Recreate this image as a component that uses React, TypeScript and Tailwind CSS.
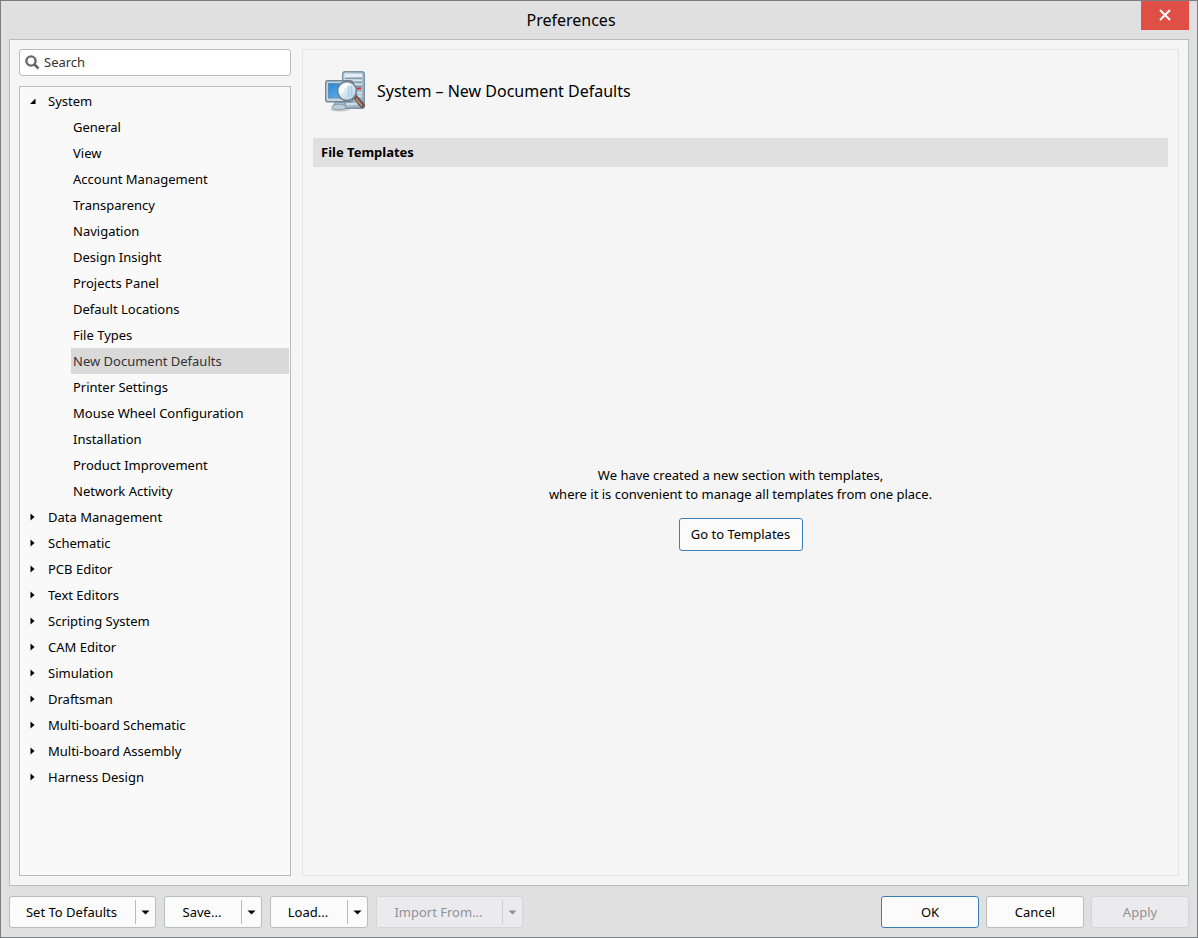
import React, { useState } from "react";

const systemPages = [
  "General",
  "View",
  "Account Management",
  "Transparency",
  "Navigation",
  "Design Insight",
  "Projects Panel",
  "Default Locations",
  "File Types",
  "New Document Defaults",
  "Printer Settings",
  "Mouse Wheel Configuration",
  "Installation",
  "Product Improvement",
  "Network Activity",
];

const sections = [
  "Data Management",
  "Schematic",
  "PCB Editor",
  "Text Editors",
  "Scripting System",
  "CAM Editor",
  "Simulation",
  "Draftsman",
  "Multi-board Schematic",
  "Multi-board Assembly",
  "Harness Design",
];

function SystemIcon() {
  return (
    <svg width="44" height="44" viewBox="0 0 44 44" aria-hidden="true" className="shrink-0">
      <defs>
        <linearGradient id="caseFill" x1="0" y1="0" x2="1" y2="1">
          <stop offset="0" stopColor="#d3dfe8" />
          <stop offset="1" stopColor="#8fa9bb" />
        </linearGradient>
        <linearGradient id="screenFill" x1="0" y1="0" x2="1" y2="1">
          <stop offset="0" stopColor="#2b83d6" />
          <stop offset="1" stopColor="#6bbcf5" />
        </linearGradient>
        <linearGradient id="lensFill" x1="0" y1="0" x2="1" y2="1">
          <stop offset="0" stopColor="#f4f8fb" />
          <stop offset="0.5" stopColor="#d8e8f3" />
          <stop offset="1" stopColor="#9fd0f0" />
        </linearGradient>
      </defs>
      <ellipse cx="17" cy="40.500" rx="10" ry="2" fill="#cdd1d4" />
      <rect x="19.700" y="2.700" width="21.600" height="36.600" rx="2.500" fill="url(#caseFill)" stroke="#7b93a4" strokeWidth="1.400" />
      <rect x="22" y="5" width="17" height="3" fill="#e6eef4" />
      <path d="M22 9.500h17M22 13.500h17M30 17.500h9" stroke="#7f9bb0" strokeWidth="1.300" />
      <path d="M22 11.200h17M22 15.200h17" stroke="#dfe9f0" strokeWidth="1.200" />
      <path d="M34 19.500h4" stroke="#e32636" strokeWidth="2" />
      <path d="M34 24h5M35 27h4M24 35h10" stroke="#dde7ee" strokeWidth="1.300" />
      <path d="M12 33h9l1.500 4h-12z" fill="#a9bdcb" stroke="#8299aa" />
      <ellipse cx="16" cy="38" rx="7" ry="2.800" fill="#bccdd8" stroke="#8299aa" />
      <rect x="2.700" y="11.700" width="27" height="21" rx="2" fill="#c6d5df" stroke="#6f8799" strokeWidth="1.400" />
      <rect x="5.500" y="14.500" width="21" height="14.500" fill="url(#screenFill)" stroke="#5685ab" strokeWidth="0.800" />
      <path d="M30.500 29l2.800-2.800 8 9c1 2-1 4.300-3 3.500z" fill="#775649" stroke="#6b5142" strokeWidth="0.800" />
      <path d="M33 29.500l6 7.500" stroke="#b99481" strokeWidth="1.400" />
      <circle cx="24" cy="22" r="9.500" fill="url(#lensFill)" stroke="#737a80" strokeWidth="1.600" />
      <path d="M25.500 17v11M28.500 17v10" stroke="#a9c9df" strokeWidth="1.400" />
      <path d="M16.500 23a7.500 7.500 0 0 1 11-7.500c-3 2-7 4-8 9z" fill="#fff" opacity="0.800" />
    </svg>
  );
}

function Arrow({ open }: { open?: boolean }) {
  return (
    <svg width="6" height="8" viewBox="0 0 6 8" aria-hidden="true" className="shrink-0">
      <path d={open ? "M5.500 1.500V7H0z" : "M0.500 0.500L4.500 4L0.500 7.500z"} fill="#000" />
    </svg>
  );
}

function SplitButton({ label, wide, disabled }: { label: string; wide?: boolean; disabled?: boolean }) {
  const tone = disabled
    ? "border-[#d6d6d8] bg-[#ebebed] text-[#929296]"
    : "border-[#b9bcbc] bg-[#fbfbfb] text-black";
  return (
    <div className={`flex h-8 items-center rounded-[3px] border ${wide ? "w-[147px]" : "w-[98px]"} ${tone}`}>
      <button type="button" disabled={disabled} className="h-full flex-1 whitespace-nowrap pr-[2px]">
        {label}
      </button>
      <button
        type="button"
        disabled={disabled}
        aria-label={`${label} options`}
        className={`flex h-6 w-5 items-center justify-center border-l pr-px ${disabled ? "border-[#d0d0d2]" : "border-[#b9bcbc]"}`}
      >
        <svg width="9" height="5" viewBox="0 0 9 5" aria-hidden="true">
          <path d="M0.500 0.500h8L4.500 4.500z" fill="currentColor" />
        </svg>
      </button>
    </div>
  );
}

const dialogButton = "h-8 w-[98px] rounded-[3px] border";

export default function App() {
  const [page, setPage] = useState("New Document Defaults");

  return (
    <div className="flex min-h-screen flex-col border border-[#7a7c7e] bg-[#e0e0e0] font-['Noto_Sans','Open_Sans',sans-serif] text-[13px] leading-[19px] text-black">
      <header className="relative flex h-[38px] items-center justify-center pr-14">
        <h1 className="text-base">Preferences</h1>
        <button
          type="button"
          aria-label="Close"
          className="absolute top-0 right-2 flex h-[29px] w-12 items-center justify-center bg-[#df4f45] pb-[2px]"
        >
          <svg width="12" height="12" viewBox="0 0 12 12" aria-hidden="true">
            <path d="M1 1l10 10M11 1L1 11" stroke="#fff" strokeWidth="2" />
          </svg>
        </button>
      </header>

      <main className="mx-2 flex flex-1 gap-[11px] border border-[#b9bcbc] bg-[#f5f5f5] p-[9px]">
        <aside className="flex w-[272px] shrink-0 flex-col gap-[10px]">
          <label className="flex h-[27px] items-center gap-1 rounded-[3px] border border-[#b9bcbc] bg-white pl-[5px]">
            <svg width="15" height="15" viewBox="0 0 15 15" fill="none" stroke="#686868" aria-hidden="true" className="shrink-0">
              <circle cx="6" cy="6" r="4.600" strokeWidth="2.400" />
              <path d="M9.500 9.500l4 4" strokeWidth="2.600" />
            </svg>
            <input
              type="text"
              aria-label="Search"
              placeholder="Search"
              className="min-w-0 flex-1 bg-transparent outline-none placeholder:text-[#333333]"
            />
          </label>

          <nav aria-label="Preference pages" className="flex-1 border border-[#b9bcbc] bg-[#f9f9f9] py-px pr-px">
            <ul>
              <li>
                <button type="button" aria-expanded="true" className="flex h-[26px] w-full items-center gap-3 pl-[10px] text-left">
                  <Arrow open />
                  System
                </button>
                <ul className="pl-[51px]">
                  {systemPages.map((name) => (
                    <li key={name}>
                      <button
                        type="button"
                        onClick={() => setPage(name)}
                        className={`block h-[26px] w-full pl-[2px] text-left ${name === page ? "bg-[#d9d9d9] text-[#333333]" : ""}`}
                      >
                        {name}
                      </button>
                    </li>
                  ))}
                </ul>
              </li>
              {sections.map((name) => (
                <li key={name}>
                  <button type="button" aria-expanded="false" className="flex h-[26px] w-full items-center gap-3 pl-[10px] text-left">
                    <Arrow />
                    {name}
                  </button>
                </li>
              ))}
            </ul>
          </nav>
        </aside>

        <section className="flex min-w-0 flex-1 flex-col border border-[#e4e4e4] px-[10px]">
          <div className="flex h-[88px] items-center gap-[10px] pb-[6px] pl-[10px]">
            <SystemIcon />
            <h2 className="text-base">System – {page}</h2>
          </div>
          <h3 className="bg-[#e0e0e0] px-2 py-[5px] font-bold">File Templates</h3>
          <div className="flex flex-1 flex-col items-center justify-center gap-[14px] pb-[26px]">
            <p className="text-center">
              We have created a new section with templates,
              <br />
              where it is convenient to manage all templates from one place.
            </p>
            <button type="button" className="h-[33px] w-[124px] rounded-[3px] border border-[#3c7fb8] bg-[#fbfbfb]">
              Go to Templates
            </button>
          </div>
        </section>
      </main>

      <footer className="flex justify-between gap-4 px-2 pt-[10px] pb-[9px]">
        <div className="flex gap-2">
          <SplitButton label="Set To Defaults" wide />
          <SplitButton label="Save..." />
          <SplitButton label="Load..." />
          <SplitButton label="Import From..." wide disabled />
        </div>
        <div className="flex gap-[7px]">
          <button type="button" className={`${dialogButton} border-[#3c7fb8] bg-[#fbfbfb]`}>OK</button>
          <button type="button" className={`${dialogButton} border-[#b9bcbc] bg-[#fbfbfb]`}>Cancel</button>
          <button type="button" disabled className={`${dialogButton} border-[#d6d6d8] bg-[#ebebed] text-[#929296]`}>Apply</button>
        </div>
      </footer>
    </div>
  );
}
